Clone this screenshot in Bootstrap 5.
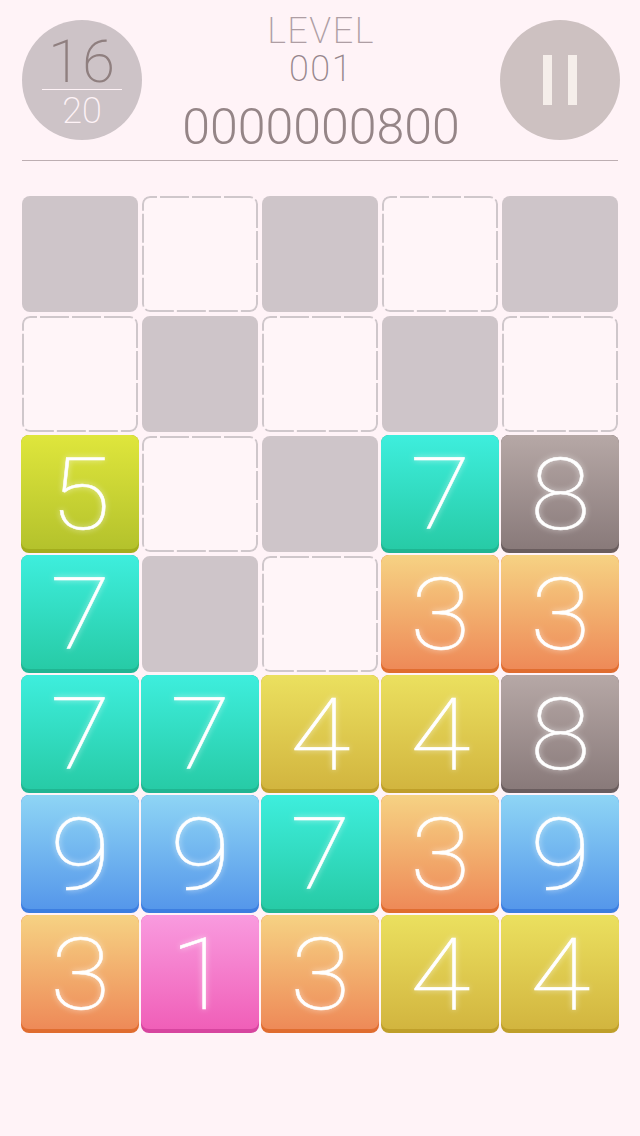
<!DOCTYPE html>
<html lang="en">
<head>
    <meta charset="UTF-8">
    <meta name="viewport" content="width=device-width, initial-scale=1.0">
    <title>Number Tiles</title>
    <link href="https://cdn.jsdelivr.net/npm/bootstrap@5.3.1/dist/css/bootstrap.min.css" rel="stylesheet">
    <style>
        body {
            background-color: #fff3f7;
            font-family: Roboto, "Liberation Sans", sans-serif;
            font-weight: 200;
            width: 640px;
            height: 1136px;
            overflow: hidden;
        }
        .game-head {
            height: 161px;
            margin: 0 22px;
            padding-top: 20px;
            border-bottom: 1px solid #bdaeb2;
        }
        .round-btn {
            width: 120px;
            height: 120px;
            border-radius: 50%;
            flex: none;
        }
        .moves {
            background-color: #cdc3c7;
        }
        .moves-left {
            width: 80px;
            height: 70px;
            padding-top: 14px;
            font-size: 60px;
            line-height: 56px;
            letter-spacing: 1px;
            color: #8f7f7f;
            border-bottom: 1px solid #fff3f7;
        }
        .moves-total {
            font-size: 36px;
            line-height: 42px;
            color: #fff3f7;
        }
        .pause {
            background-color: #cdc1c1;
            gap: 16px;
            margin-right: -2px;
        }
        .pause i {
            width: 9px;
            height: 50px;
            background-color: #f5eeea;
        }
        .level-box {
            margin-top: -9px;
        }
        .level-label {
            font-size: 36px;
            line-height: 40px;
            letter-spacing: 1.5px;
            color: #ae9ea4;
        }
        .level-num {
            font-size: 36px;
            line-height: 36px;
            letter-spacing: 1.5px;
            color: #96868c;
        }
        .score {
            font-size: 50px;
            line-height: 60px;
            margin-top: 10px;
            font-weight: 300;
            color: #958587;
        }
        .board {
            display: grid;
            grid-template-columns: repeat(5, 120px);
            grid-auto-rows: 120px;
            margin: 33px 0 0 20px;
        }
        .slot {
            display: block;
            margin: 2px;
            width: 116px;
            height: 116px;
            border-radius: 8px;
        }
        .slot-gray {
            background-color: #cec5c9;
        }
        #dashed rect {
            fill: #fff5f8;
            stroke: #cfc7cb;
            stroke-width: 2;
            stroke-dasharray: 29 3;
            stroke-dashoffset: 22;
        }
        .tile {
            margin: 1px;
            height: 118px;
            border-radius: 8px;
        }
        .tile-face {
            height: 114px;
            padding-top: 5px;
            border-radius: 8px;
            color: #fff;
            font-size: 100px;
            font-weight: 100;
            line-height: 1;
            text-shadow: 0 0 6px rgba(255, 255, 255, .7);
            -webkit-text-stroke: .5px #fff;
        }
        .digit {
            display: inline-block;
            transform: scaleX(1.1);
        }
        .n1 { background-color: #d7459f; }
        .n1 .tile-face { background-image: linear-gradient(#f99bdf, #f05fb8); }
        .n3 { background-color: #e06d30; }
        .n3 .tile-face { background-image: linear-gradient(#f6d283, #ee8a58); }
        .n4 { background-color: #bf9f2a; }
        .n4 .tile-face { background-image: linear-gradient(#ebe05f, #d2b53f); }
        .n5 { background-color: #a3ad1c; }
        .n5 .tile-face { background-image: linear-gradient(#dfe63c, #b4c22c); }
        .n7 { background-color: #20b592; }
        .n7 .tile-face { background-image: linear-gradient(#3eeedd, #27cba6); }
        .n8 { background-color: #6a5d5e; }
        .n8 .tile-face { background-image: linear-gradient(#b6a8a6, #897a7a); }
        .n9 { background-color: #3c7ee0; }
        .n9 .tile-face { background-image: linear-gradient(#8ed5f5, #5597ea); }
    </style>
</head>
<body>

<svg width="0" height="0" class="position-absolute">
    <symbol id="dashed" viewBox="0 0 116 116">
        <rect x="1" y="1" width="114" height="114" rx="7"/>
    </symbol>
</svg>

<div class="game-head d-flex justify-content-between">
    <div class="round-btn moves d-flex flex-column align-items-center">
        <div class="moves-left text-center">16</div>
        <div class="moves-total">20</div>
    </div>
    <div class="level-box text-center">
        <div class="level-label">LEVEL</div>
        <div class="level-num">001</div>
        <div class="score">0000000800</div>
    </div>
    <div class="round-btn pause d-flex justify-content-center align-items-center">
        <i></i><i></i>
    </div>
</div>

<div class="board">
    <div class="slot slot-gray"></div>
    <svg class="slot"><use href="#dashed"/></svg>
    <div class="slot slot-gray"></div>
    <svg class="slot"><use href="#dashed"/></svg>
    <div class="slot slot-gray"></div>

    <svg class="slot"><use href="#dashed"/></svg>
    <div class="slot slot-gray"></div>
    <svg class="slot"><use href="#dashed"/></svg>
    <div class="slot slot-gray"></div>
    <svg class="slot"><use href="#dashed"/></svg>

    <div class="tile n5"><div class="tile-face d-flex justify-content-center align-items-center"><span class="digit">5</span></div></div>
    <svg class="slot"><use href="#dashed"/></svg>
    <div class="slot slot-gray"></div>
    <div class="tile n7"><div class="tile-face d-flex justify-content-center align-items-center"><span class="digit">7</span></div></div>
    <div class="tile n8"><div class="tile-face d-flex justify-content-center align-items-center"><span class="digit">8</span></div></div>

    <div class="tile n7"><div class="tile-face d-flex justify-content-center align-items-center"><span class="digit">7</span></div></div>
    <div class="slot slot-gray"></div>
    <svg class="slot"><use href="#dashed"/></svg>
    <div class="tile n3"><div class="tile-face d-flex justify-content-center align-items-center"><span class="digit">3</span></div></div>
    <div class="tile n3"><div class="tile-face d-flex justify-content-center align-items-center"><span class="digit">3</span></div></div>

    <div class="tile n7"><div class="tile-face d-flex justify-content-center align-items-center"><span class="digit">7</span></div></div>
    <div class="tile n7"><div class="tile-face d-flex justify-content-center align-items-center"><span class="digit">7</span></div></div>
    <div class="tile n4"><div class="tile-face d-flex justify-content-center align-items-center"><span class="digit">4</span></div></div>
    <div class="tile n4"><div class="tile-face d-flex justify-content-center align-items-center"><span class="digit">4</span></div></div>
    <div class="tile n8"><div class="tile-face d-flex justify-content-center align-items-center"><span class="digit">8</span></div></div>

    <div class="tile n9"><div class="tile-face d-flex justify-content-center align-items-center"><span class="digit">9</span></div></div>
    <div class="tile n9"><div class="tile-face d-flex justify-content-center align-items-center"><span class="digit">9</span></div></div>
    <div class="tile n7"><div class="tile-face d-flex justify-content-center align-items-center"><span class="digit">7</span></div></div>
    <div class="tile n3"><div class="tile-face d-flex justify-content-center align-items-center"><span class="digit">3</span></div></div>
    <div class="tile n9"><div class="tile-face d-flex justify-content-center align-items-center"><span class="digit">9</span></div></div>

    <div class="tile n3"><div class="tile-face d-flex justify-content-center align-items-center"><span class="digit">3</span></div></div>
    <div class="tile n1"><div class="tile-face d-flex justify-content-center align-items-center"><span class="digit">1</span></div></div>
    <div class="tile n3"><div class="tile-face d-flex justify-content-center align-items-center"><span class="digit">3</span></div></div>
    <div class="tile n4"><div class="tile-face d-flex justify-content-center align-items-center"><span class="digit">4</span></div></div>
    <div class="tile n4"><div class="tile-face d-flex justify-content-center align-items-center"><span class="digit">4</span></div></div>
</div>

<script src="https://cdn.jsdelivr.net/npm/bootstrap@5.3.1/dist/js/bootstrap.bundle.min.js"></script>
</body>
</html>
